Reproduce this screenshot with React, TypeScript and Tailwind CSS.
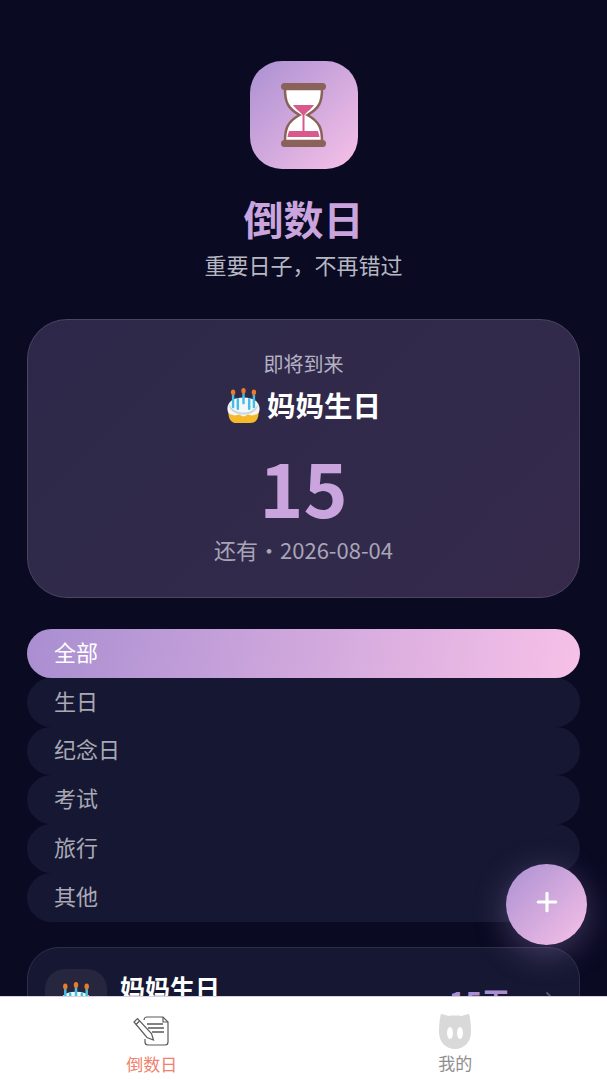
import { Plus, ChevronRight } from "lucide-react";

const filters = ["全部", "生日", "纪念日", "考试", "旅行", "其他"];

function Cake({ size }: { size: number }) {
    return (
        <svg width={size} height={size} viewBox="0 0 36 37">
            <path d="M2 25c0 8 3 12 9 12h14c6 0 9-4 9-12z" fill="#f7b92c" />
            <path d="M1 22c0-8 7-12 17-12s17 4 17 12c0 4-2 6-4 6-2 0-2.500 1-4 1-2 0-2.500-1-4-1s-3 2-5 2-3.500-2-5-2-2 1-4 1-2-1-4-1c-2 0-4-2-4-6z" fill="#f5f8f8" />
            <path d="M3 17c2 6 9 9 15 9s13-3 15-9c1 6-6 11-15 11S2 23 3 17z" fill="#c9d6db" />
            <path d="M7 8v12M18 6v10M29 8v12M12 12v10M24 12v10" stroke="#43bfe6" strokeWidth="2.600" strokeLinecap="round" />
            <ellipse cx="7" cy="4.500" rx="2.300" ry="3" fill="#ec7a2b" />
            <ellipse cx="18" cy="3" rx="2.300" ry="3" fill="#ec7a2b" />
            <ellipse cx="29" cy="4.500" rx="2.300" ry="3" fill="#ec7a2b" />
        </svg>
    );
}

function Hourglass() {
    return (
        <svg width="45" height="64" viewBox="0 0 45 64">
            <path d="M4 6c0 12 2 19 14.500 26C6 39 4 46 4 58h37c0-12-2-19-14.500-26C39 25 41 18 41 6z" fill="#fff" stroke="#8a6259" strokeWidth="2.500" />
            <path d="M12 22h21c-2.500 4-7.500 7-9.500 10v19h-2V32c-2-3-7-6-9.500-10z" fill="#d85a8c" />
            <path d="M6.500 54c.3-2 .8-4 1.600-6h28.800c.8 2 1.300 4 1.600 6z" fill="#d85a8c" />
            <rect x="0" y="0" width="45" height="7" rx="3.500" fill="#8a6259" />
            <rect x="0" y="57" width="45" height="7" rx="3.500" fill="#8a6259" />
        </svg>
    );
}

function NoteIcon() {
    return (
        <svg width="37" height="30" viewBox="0 0 37 30" fill="none" stroke="#5a5a5a" strokeWidth="1.200">
            <path d="M11 4a3 3 0 0 1 3-3h16l5 5v20a3 3 0 0 1-3 3H15a3 3 0 0 1-3-3v-3" />
            <path d="M30 1v5h5" />
            <path d="M14 8h16M15 12h16M19 16h12" strokeWidth="1.600" />
            <path d="M1 6l3.500-3.500 14 15 2 6.500-6.500-2.500z" fill="#fff" />
            <path d="M3 8.500l3.500-3.500" />
        </svg>
    );
}

function CatIcon() {
    return (
        <svg width="32" height="36" viewBox="0 0 32 36">
            <path d="M2 1c2 0 5 1 7 2 4-.6 10-.6 14 0 2-1 5-2 7-2 1.500 5 2 12 2 18 0 10-7 17-16 17S0 29 0 19C0 13 .5 6 2 1z" fill="#d9d9d9" />
            <ellipse cx="11" cy="20" rx="3" ry="6" fill="#fff" />
            <ellipse cx="21" cy="20" rx="3" ry="6" fill="#fff" />
        </svg>
    );
}

export default function App() {
    return (
        <div className="relative flex flex-col h-[1080px] w-full overflow-hidden bg-[#0a0a23] font-['Noto_Sans_CJK_SC','Noto_Sans',sans-serif]">
            <main className="flex-1 min-h-0 overflow-hidden px-[27px] pt-[61px]">
                <header className="flex flex-col items-center">
                    <div className="flex items-center justify-center w-[108px] h-[108px] rounded-[32px] bg-linear-[135deg] from-[#ab90d2] to-[#f7c1e8]">
                        <Hourglass />
                    </div>
                    <h1 className="mt-[20px] text-[40px] leading-[58px] font-bold text-[#c9a4dd]">倒数日</h1>
                    <p className="mt-[1px] text-[22px] leading-[32px] text-[#b7b7c2]">重要日子，不再错过</p>
                </header>

                <section className="mt-[39px] flex flex-col items-center h-[279px] rounded-[40px] border border-[#4a4560] bg-linear-[135deg] from-[#2d2849] via-[#322a4b] via-70% to-[#36294a] pt-[29px]">
                    <p className="text-[20px] leading-[30px] text-[#b5b1c2]">即将到来</p>
                    <div className="mt-[5px] flex items-center gap-[6px]">
                        <Cake size={35} />
                        <span className="text-[28.500px] leading-[42px] font-bold text-white">妈妈生日</span>
                    </div>
                    <p className="mt-[15px] text-[75px] leading-[90px] font-bold text-[#c9a4dd]">15</p>
                    <p className="mt-[2px] flex text-[22px] leading-[32px] text-[#a9a5b8]">
                        <span>还有</span>
                        <span className="w-[22px] text-center">·</span>
                        <span>2026-08-04</span>
                    </p>
                </section>

                <nav className="mt-[31px] flex flex-col">
                    {filters.map((item, index) => (
                        <div
                            key={item}
                            className={
                                index === 0
                                    ? "flex items-center h-[48.750px] px-[27px] pb-[4px] rounded-full bg-linear-[100deg] from-[#a98ed1] to-[#f7c1e8] text-[22px] text-white"
                                    : "flex items-center h-[48.750px] px-[27px] pb-[4px] rounded-full bg-[#161833] text-[22px] text-[#a9a9b5]"
                            }
                        >
                            {item}
                        </div>
                    ))}
                </nav>

                <article className="mt-[25.500px] flex items-start h-[120px] rounded-[32px] border border-[#2e2e48] bg-[#161833] px-[17px] pt-[21px]">
                    <div className="flex items-start justify-center w-[62px] h-[62px] rounded-[20px] bg-[#26263f] pt-[13px]">
                        <Cake size={36} />
                    </div>
                    <span className="ml-[13px] mt-[-2px] text-[25px] leading-[40px] font-bold text-white">妈妈生日</span>
                    <span className="ml-auto mt-[10px] text-[28px] leading-[44px] font-bold text-[#a98fd2]">15天</span>
                    <ChevronRight className="ml-[28px] mt-[18px] text-[#55556c]" size={24} />
                </article>
            </main>

            <footer className="relative z-10 flex h-[84px] bg-white border-t border-[#d8d0e0]">
                <div className="flex-1 flex flex-col items-center pt-[19px]">
                    <NoteIcon />
                    <span className="mt-[5px] text-[17px] leading-[25px] text-[#f0806c]">倒数日</span>
                </div>
                <div className="flex-1 flex flex-col items-center pt-[16px]">
                    <CatIcon />
                    <span className="mt-[1px] text-[17px] leading-[25px] text-[#8f8f8f]">我的</span>
                </div>
            </footer>

            <button className="absolute left-[506px] top-[864px] z-20 flex items-center justify-center w-[81px] h-[81px] rounded-full bg-linear-[135deg] from-[#ab90d2] to-[#f7c1e8] text-white shadow-[0_8px_32px_rgba(171,144,210,0.35)]">
                <Plus className="mb-[6px]" size={30} strokeWidth={2.500} />
            </button>
        </div>
    );
}
